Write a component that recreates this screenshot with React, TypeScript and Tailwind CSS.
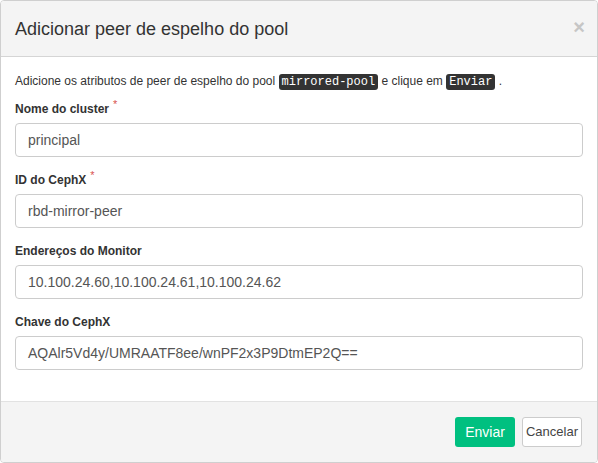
export default function App() {
  const fields = [
    { label: "Nome do cluster", value: "principal", required: true },
    { label: "ID do CephX", value: "rbd-mirror-peer", required: true },
    { label: "Endereços do Monitor", value: "10.100.24.60,10.100.24.61,10.100.24.62", required: false },
    { label: "Chave do CephX", value: "AQAlr5Vd4y/UMRAATF8ee/wnPF2x3P9DtmEP2Q==", required: false },
  ];

  return (
    <div className="w-[598px] h-[463px] bg-white font-['Liberation_Sans',Arial,sans-serif] text-[#333]">
      <div className="w-full h-full flex flex-col border border-[#cfcfcf] rounded-[4px] overflow-hidden bg-white">
        {/* Header */}
        <div className="h-[56px] shrink-0 flex items-center justify-between pl-[14px] pr-[12px] bg-[#f4f4f4] border-b border-[#d5d5d5]">
          <h4 className="text-[18px] leading-none">Adicionar peer de espelho do pool</h4>
          <button className="text-[20px] font-bold leading-none text-[#c6c6c6] -mt-[3px]">×</button>
        </div>

        {/* Body */}
        <div className="flex-1 px-[14px] pt-[15px]">
          <p className="text-[12px] leading-[18px] mb-[10px]">
            Adicione os atributos de peer de espelho do pool{" "}
            <code className="font-['Liberation_Mono',monospace] text-[12px] bg-[#333] text-white rounded-[3px] px-[3px] py-[1px]">mirrored-pool</code>{" "}
            e clique em{" "}
            <code className="font-['Liberation_Mono',monospace] text-[12px] bg-[#333] text-white rounded-[3px] px-[3px] py-[1px]">Enviar</code>{" "}
            .
          </p>

          {fields.map((f) => (
            <div key={f.label} className="mb-[15px]">
              <label className="block text-[12px] font-bold leading-[17px] mb-[5px]">
                {f.label}
                {f.required && (
                  <span className="text-[#d9534f] font-normal text-[11px] ml-[4px] relative -top-[5px]">*</span>
                )}
              </label>
              <div className="h-[34px] flex items-center px-[12px] border border-[#cccccc] rounded-[4px] text-[14px] text-[#555]">
                {f.value}
              </div>
            </div>
          ))}
        </div>

        {/* Footer */}
        <div className="h-[61px] shrink-0 flex items-center justify-end gap-[7px] pr-[15px] bg-[#f4f4f4] border-t border-[#e2e2e2]">
          <button className="h-[30px] w-[60px] rounded-[3px] bg-[#00c080] text-white text-[14px]">Enviar</button>
          <button className="h-[30px] w-[60px] rounded-[3px] bg-white border border-[#cccccc] text-[#444] text-[13px]">Cancelar</button>
        </div>
      </div>
    </div>
  );
}
